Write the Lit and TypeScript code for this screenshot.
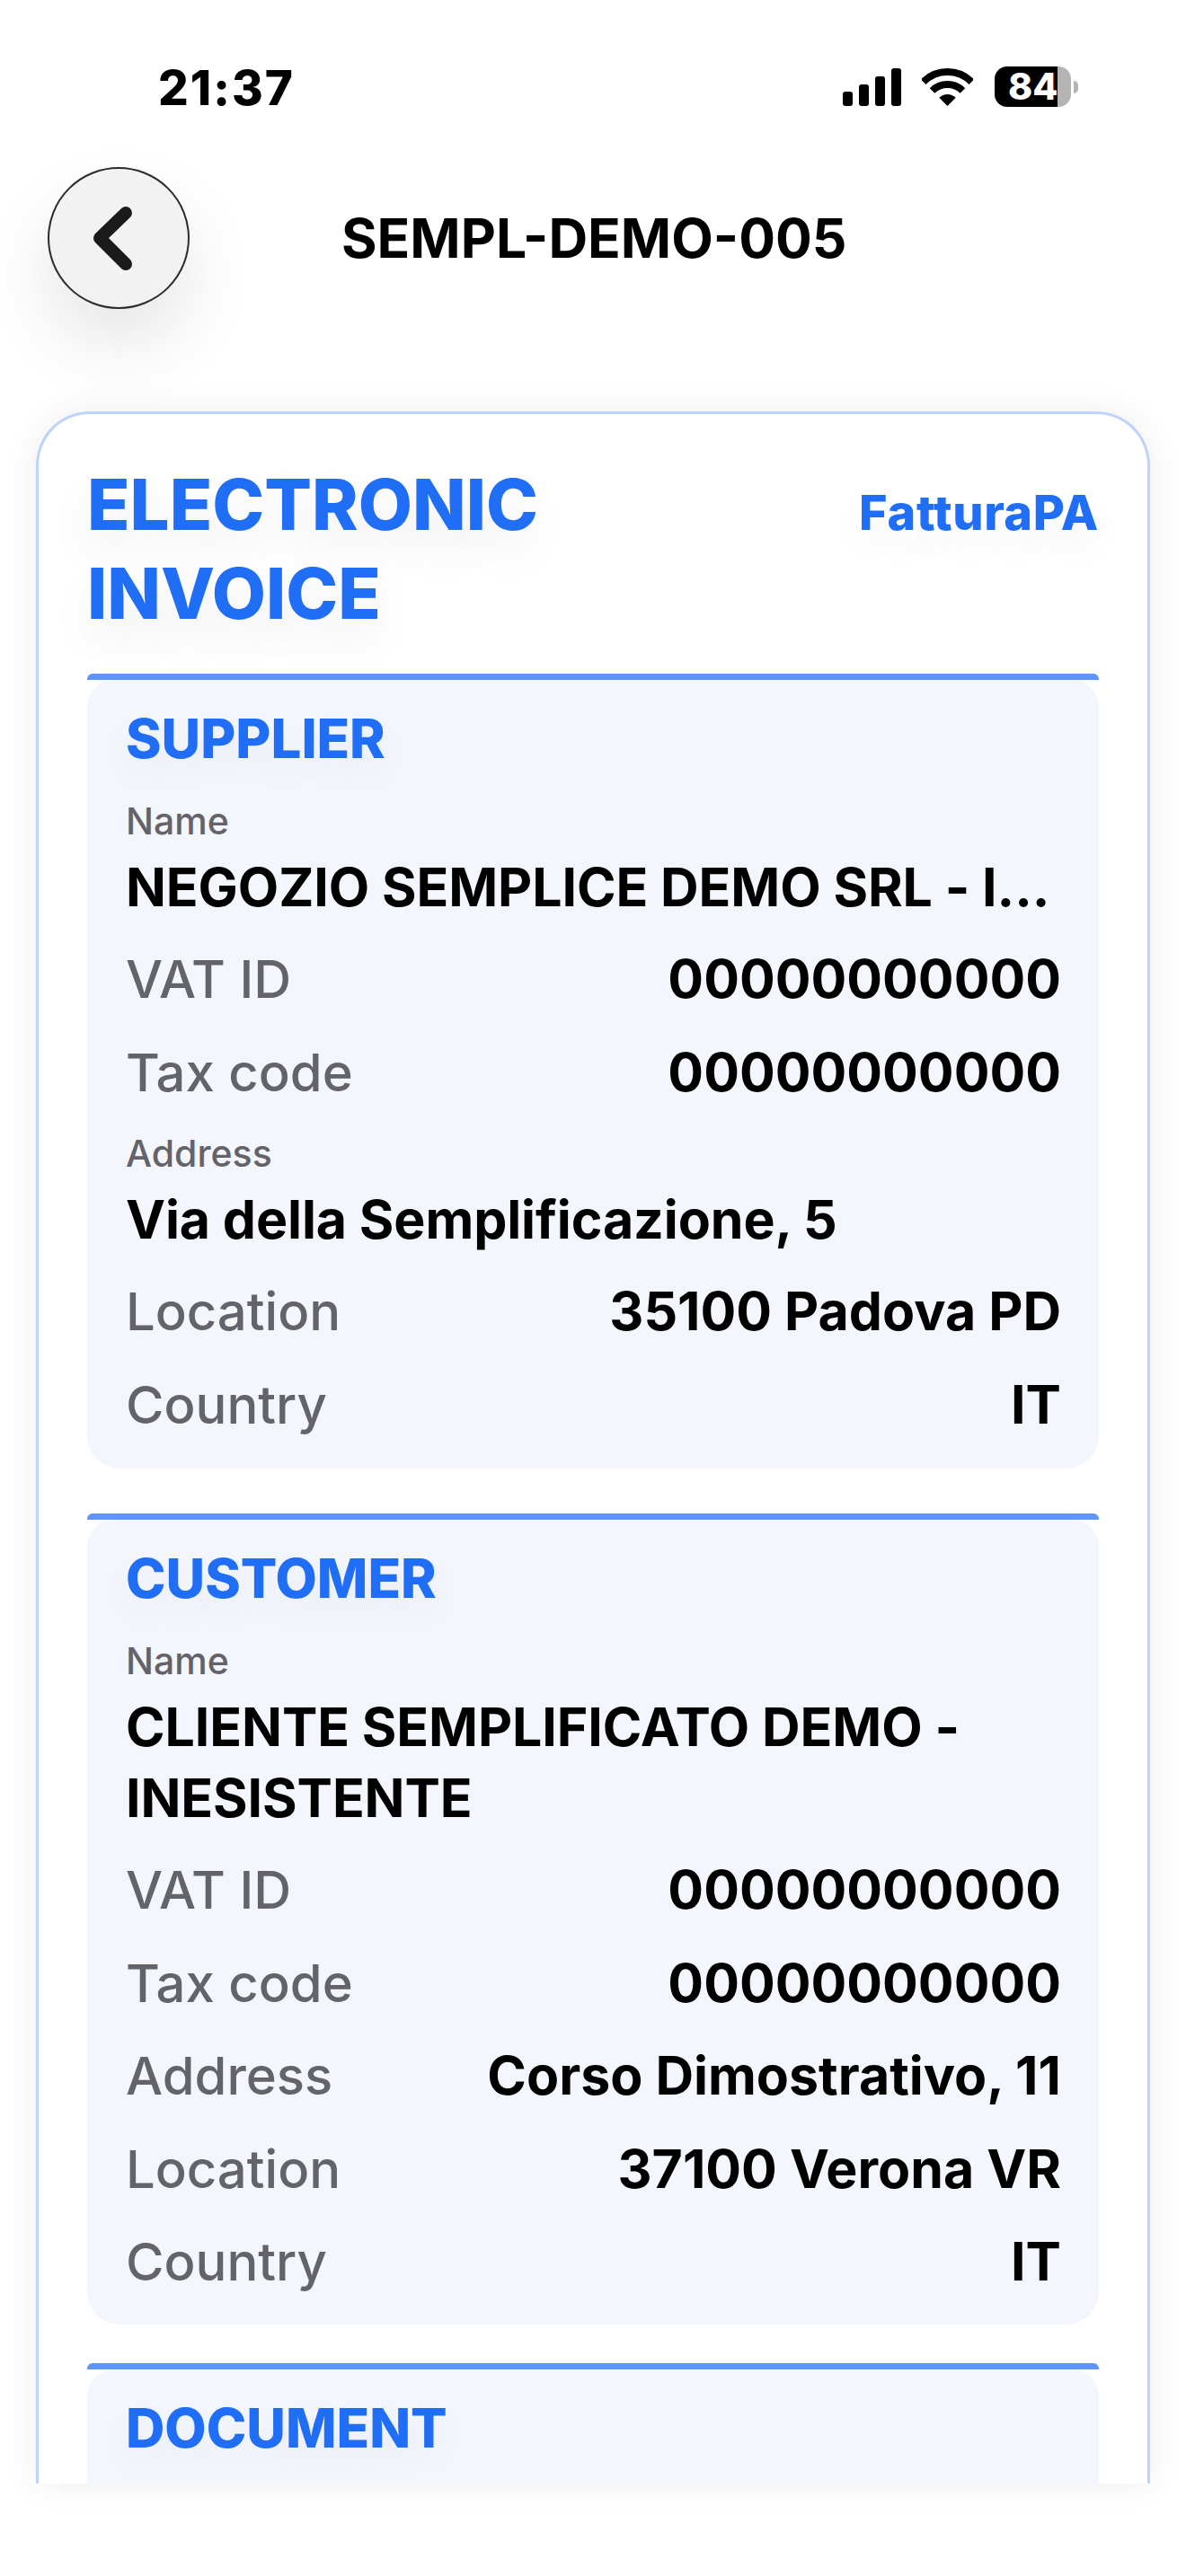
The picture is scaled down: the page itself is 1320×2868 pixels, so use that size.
import { LitElement, css, html } from "lit";
import { customElement, property } from "lit/decorators.js";

type Row = { label: string; value: string; stacked?: boolean };

const supplier: Row[] = [
  { label: "Name", value: "NEGOZIO SEMPLICE DEMO SRL - I...", stacked: true },
  { label: "VAT ID", value: "00000000000" },
  { label: "Tax code", value: "00000000000" },
  { label: "Address", value: "Via della Semplificazione, 5", stacked: true },
  { label: "Location", value: "35100 Padova PD" },
  { label: "Country", value: "IT" },
];

const customer: Row[] = [
  { label: "Name", value: "CLIENTE SEMPLIFICATO DEMO - INESISTENTE", stacked: true },
  { label: "VAT ID", value: "00000000000" },
  { label: "Tax code", value: "00000000000" },
  { label: "Address", value: "Corso Dimostrativo, 11" },
  { label: "Location", value: "37100 Verona VR" },
  { label: "Country", value: "IT" },
];

@customElement("invoice-section")
export class InvoiceSection extends LitElement {
  @property({ type: String }) heading = "";
  @property({ attribute: false }) rows: Row[] = [];

  render() {
    return html`
      <div class="strip"></div>
      <div class="body">
        <div class="heading">${this.heading}</div>
        ${this.rows.map((r) =>
          r.stacked
            ? html`<div class="stacked">
                <div class="small">${r.label}</div>
                <div class="value">${r.value}</div>
              </div>`
            : html`<div class="row">
                <span class="label">${r.label}</span>
                <span class="value">${r.value}</span>
              </div>`
        )}
      </div>
    `;
  }

  static styles = css`
    :host {
      display: block;
      margin-top: 43px;
    }
    .strip {
      height: 7px;
      background: #5e95f8;
      border-radius: 6px 6px 0 0;
    }
    .body {
      background: #f3f6fd;
      border-radius: 30px 30px 36px 36px;
      padding: 31px 42px var(--pad-bottom, 18px) 43px;
      min-height: 240px;
    }
    .heading {
      color: #1f6ef5;
      font-size: 60px;
      font-weight: 800;
      line-height: 68px;
      margin-bottom: 19px;
      text-shadow: 0 16px 36px rgba(0, 0, 0, 0.05);
    }
    .small {
      color: #636369;
      font-size: 41px;
      font-weight: 500;
      line-height: 46px;
    }
    .stacked {
      padding: 16px 0 11px;
    }
    .stacked .value {
      line-height: 79px;
      margin-top: 11px;
      letter-spacing: -0.1px;
    }
    .row {
      display: flex;
      justify-content: space-between;
      align-items: baseline;
      height: 103.5px;
      line-height: 103.5px;
    }
    .label {
      color: #636369;
      font-size: 58px;
      font-weight: 500;
    }
    .value {
      color: #000;
      font-size: 59px;
      font-weight: 700;
    }
  `;
}

@customElement("app-root")
export class AppRoot extends LitElement {
  render() {
    return html`
      <div class="status">
        <span class="time">21:37</span>
        <div class="icons">
          <svg width="65" height="42" viewBox="0 0 65 42">
            <rect x="0" y="26" width="11" height="16" rx="3" />
            <rect x="18" y="18" width="11" height="24" rx="3" />
            <rect x="36" y="9" width="11" height="33" rx="3" />
            <rect x="54" y="0" width="11" height="42" rx="3" />
          </svg>
          <svg width="57" height="42" viewBox="0 0 57 42">
            <path d="M1.63 15.13A38 38 0 0 1 55.37 15.13" fill="none" stroke="#000" stroke-width="8" />
            <path d="M11.53 25.03A24 24 0 0 1 45.47 25.03" fill="none" stroke="#000" stroke-width="8" />
            <path d="M28.5 42L19.3 32.8A13 13 0 0 1 37.7 32.8Z" />
          </svg>
          <div class="battery">
            <div class="cell"><span>84</span></div>
            <div class="nub"></div>
          </div>
        </div>
      </div>
      <header>
        <button class="back" aria-label="Back">
          <svg width="154" height="154" viewBox="0 0 154 154">
            <path d="M85 49L56 77L85 106" fill="none" stroke="#1a1a1a" stroke-width="14" stroke-linecap="round" stroke-linejoin="round" />
          </svg>
        </button>
        <h1>SEMPL-DEMO-005</h1>
      </header>
      <main class="card">
        <div class="card-head">
          <div class="title">ELECTRONIC INVOICE</div>
          <div class="kind">FatturaPA</div>
        </div>
        <invoice-section class="first" heading="SUPPLIER" .rows=${supplier}></invoice-section>
        <invoice-section class="second" heading="CUSTOMER" .rows=${customer}></invoice-section>
        <invoice-section heading="DOCUMENT" .rows=${[]}></invoice-section>
      </main>
    `;
  }

  static styles = css`
    :host {
      display: block;
      width: 1320px;
      height: 2868px;
      overflow: hidden;
      background: #fff;
      font-family: Inter, "Liberation Sans", sans-serif;
    }
    .status {
      display: flex;
      justify-content: space-between;
      padding: 68px 120px 0 176px;
      height: 60px;
    }
    .time {
      font-size: 53px;
      font-weight: 800;
      letter-spacing: 2px;
      line-height: 60px;
      color: #000;
    }
    .icons {
      display: flex;
      align-items: flex-start;
      gap: 23px;
      padding-top: 8px;
    }
    .battery {
      display: flex;
      align-items: center;
      margin: -2px 0 0 1px;
    }
    .cell {
      width: 85px;
      height: 45px;
      border-radius: 14px;
      background: linear-gradient(90deg, #000 70px, #b4b4b4 70px);
      color: #fff;
      font-size: 41px;
      font-weight: 800;
      line-height: 45px;
      padding-left: 15px;
      box-sizing: border-box;
    }
    .nub {
      width: 5px;
      height: 14px;
      margin-left: 3px;
      background: #b4b4b4;
      border-radius: 0 7px 7px 0;
    }
    header {
      display: flex;
      align-items: center;
      gap: 169px;
      margin-top: 58px;
      padding-left: 53px;
    }
    .back {
      width: 158px;
      height: 158px;
      padding: 0;
      flex: none;
      box-sizing: border-box;
      border: 2px solid #2b2b2b;
      border-radius: 50%;
      background: #f2f2f2;
      box-shadow: 0 40px 80px rgba(0, 0, 0, 0.1);
    }
    .back svg {
      display: block;
    }
    h1 {
      margin: 0;
      font-size: 60.5px;
      font-weight: 700;
      color: #000;
    }
    .card {
      box-sizing: border-box;
      height: 2307px;
      margin: 114px 40px 0;
      padding: 51px 54px 0;
      border: 3px solid #bdd3fb;
      border-bottom: none;
      border-radius: 60px 60px 0 0;
      background: #fff;
      overflow: hidden;
      box-shadow: 0 0 40px rgba(0, 0, 0, 0.07);
    }
    .card-head {
      display: flex;
      justify-content: space-between;
      align-items: baseline;
      margin-bottom: -3px;
    }
    .title {
      width: 560px;
      color: #1f6ef5;
      font-size: 78px;
      font-weight: 800;
      line-height: 99px;
      text-shadow: 0 24px 50px rgba(0, 0, 0, 0.08);
    }
    .kind {
      color: #1f6ef5;
      font-size: 54px;
      font-weight: 800;
      letter-spacing: 0.6px;
      text-shadow: 0 20px 40px rgba(0, 0, 0, 0.06);
    }
    .first {
      --pad-bottom: 20px;
    }
    .second {
      margin-top: 50px;
    }
  `;
}
